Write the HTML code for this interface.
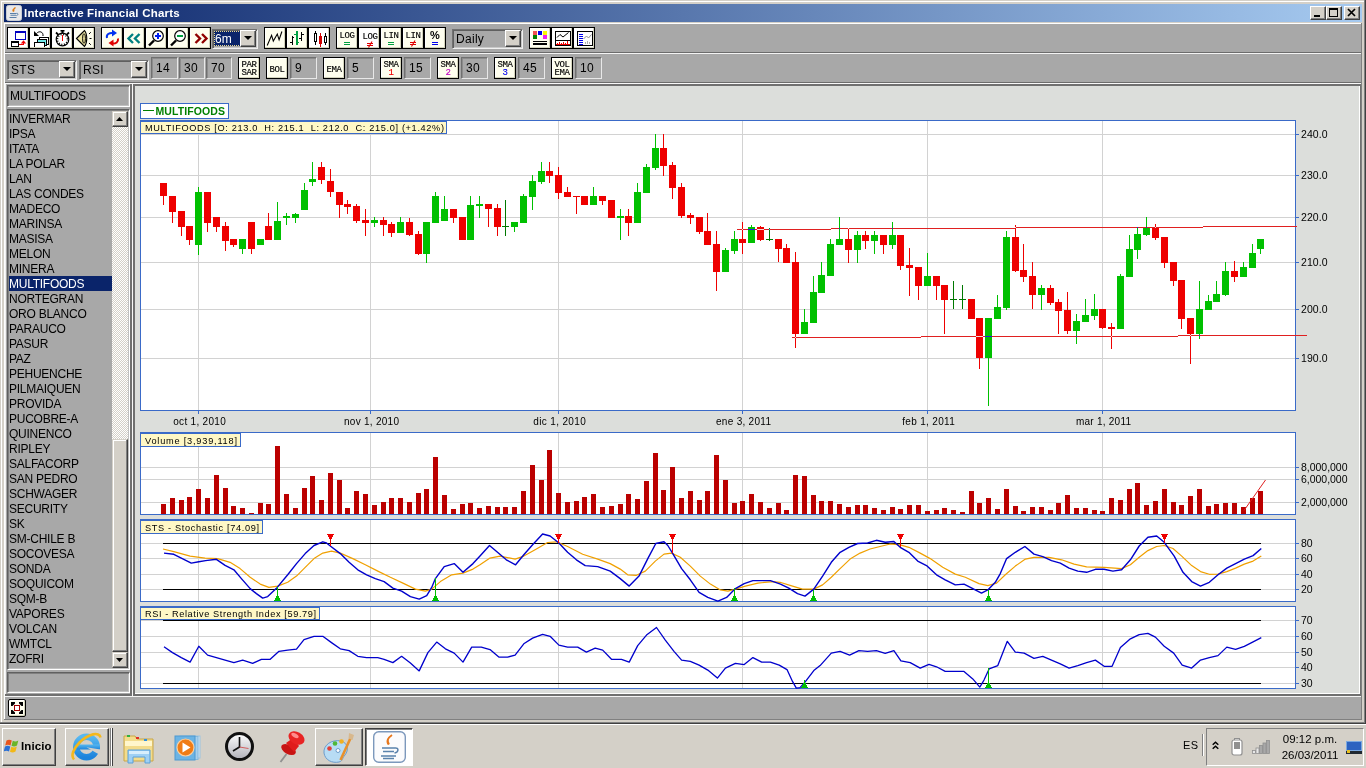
<!DOCTYPE html>
<html><head><meta charset="utf-8"><title>Interactive Financial Charts</title>
<style>
*{box-sizing:border-box;margin:0;padding:0}
html,body{width:1366px;height:768px;overflow:hidden}
body{position:relative;background:#d4d0c8;font-family:"Liberation Sans",sans-serif;font-size:12px;color:#000}
.a{position:absolute}
#root{position:absolute;left:0;top:0;width:1366px;height:768px;will-change:transform}
.tb{position:absolute;width:22px;height:22px;background:#fefeee;border:1px solid #000;box-shadow:inset -1px -1px 0 #d4d4bc,inset 1px 1px 0 #fff}
.tb.w{background:#fff}
.tb svg{position:absolute;left:0;top:0}
.tb2{position:absolute;width:22px;height:22px;background:#ffffe1;border:1px solid #000;box-shadow:inset -1px -1px 0 #808070,inset 1px 1px 0 #fff;font-family:"Liberation Mono",monospace;font-size:9px;line-height:8px;text-align:center;letter-spacing:-0.5px}
.sunk{position:absolute;border:1px solid;border-color:#606060 #fff #fff #606060;box-shadow:inset 1px 1px 0 #808080,inset -1px -1px 0 #c0c0c0;background:#a8a8a8}
.fld{position:absolute;border:1px solid;border-color:#707070 #e8e8e8 #e8e8e8 #707070;box-shadow:inset 1px 1px 0 #8c8c8c;background:#a8a8a8;font-size:12px;line-height:20px;padding-left:4px;color:#000;height:22px;letter-spacing:0.300px}
.combo{position:absolute;height:20px;border:1px solid;border-color:#707070 #f0f0f0 #f0f0f0 #707070;box-shadow:inset 1px 1px 0 #606060,inset -1px -1px 0 #c8c8c8;background:#a8a8a8;font-size:12px;letter-spacing:0.300px}
.cbtn{position:absolute;right:1px;top:0px;width:16px;height:17px;background:#d4d0c8;border:1px solid;border-color:#fff #404040 #404040 #fff;box-shadow:inset -1px -1px 0 #808080}
.li{position:absolute;left:0;width:103px;height:15px;line-height:15px;font-size:12px;padding-left:0px;padding-top:1px;white-space:nowrap;letter-spacing:-0.250px}
.sel{background:#0a246a;color:#fff}
svg text{font-family:"Liberation Sans",sans-serif}
</style></head>
<body><div id="root">
<div class="a" style="left:0px;top:0px;width:1366px;height:724px;background:#d4d0c8;"></div>
<div class="a" style="left:1px;top:1px;width:1363px;height:1px;background:#fff;"></div>
<div class="a" style="left:1px;top:1px;width:1px;height:721px;background:#fff;"></div>
<div class="a" style="left:1364px;top:0px;width:1px;height:723px;background:#808080;"></div>
<div class="a" style="left:1365px;top:0px;width:1px;height:724px;background:#404040;"></div>
<div class="a" style="left:0px;top:722px;width:1365px;height:1px;background:#808080;"></div>
<div class="a" style="left:0px;top:723px;width:1366px;height:1px;background:#404040;"></div>
<div class="a" style="left:4px;top:4px;width:1358px;height:18px;background:linear-gradient(90deg,#0a246a,#a6caf0)"></div>
<svg class="a" style="left:6px;top:5px" width="16" height="16" viewBox="0 0 16 16"><rect x="0.5" y="0.5" width="15" height="15" rx="2" fill="#e8e8ea" stroke="#c8ccd4"/><path d="M9.5 2.5c-2 1.2-2.6 2.2-1.6 4" stroke="#e07a10" stroke-width="1.3" fill="none"/><path d="M7.2 4.2c-.6.9-.4 1.6.1 2.6" stroke="#e07a10" stroke-width="1" fill="none"/><path d="M4 8.5h6.5M4.5 10.3h5.5M3.5 12.5h7" stroke="#5a7fa8" stroke-width="1.1"/><path d="M10.5 8.3c2-.3 2 1.9-.2 2.4" stroke="#5a7fa8" stroke-width="1" fill="none"/></svg>
<div class="a" style="left:24px;top:5px;height:16px;line-height:16px;color:#fff;font-weight:bold;font-size:11.5px;letter-spacing:0.2px;white-space:nowrap" id="title">Interactive Financial Charts</div>
<div class="a" style="left:1310px;top:6px;width:16px;height:14px;background:#d4d0c8;border:1px solid;border-color:#fff #404040 #404040 #fff;box-shadow:inset -1px -1px 0 #808080"></div>
<div class="a" style="left:1326px;top:6px;width:16px;height:14px;background:#d4d0c8;border:1px solid;border-color:#fff #404040 #404040 #fff;box-shadow:inset -1px -1px 0 #808080"></div>
<div class="a" style="left:1344px;top:6px;width:16px;height:14px;background:#d4d0c8;border:1px solid;border-color:#fff #404040 #404040 #fff;box-shadow:inset -1px -1px 0 #808080"></div>
<div class="a" style="left:1314px;top:15px;width:6px;height:2px;background:#000;"></div>
<div class="a" style="left:1329px;top:8px;width:9px;height:9px;border:1px solid #000;border-top-width:2px"></div>
<svg class="a" style="left:1347px;top:8px" width="10" height="9" viewBox="0 0 10 9"><path d="M1 1l7 7M8 1l-7 7" stroke="#000" stroke-width="1.7"/></svg>
<div class="a" style="left:4px;top:23px;width:1358px;height:697px;background:#808080;"></div>
<div class="a" style="left:4px;top:23px;width:1357px;height:696px;background:#fff;"></div>
<div class="a" style="left:5px;top:24px;width:1356px;height:695px;background:#a8a8a8;"></div>
<div class="a" style="left:5px;top:52px;width:1356px;height:1px;background:#6c6c6c;"></div>
<div class="a" style="left:5px;top:53px;width:1356px;height:1px;background:#f4f4f4;"></div>
<div class="a" style="left:5px;top:82px;width:1356px;height:1px;background:#6c6c6c;"></div>
<div class="a" style="left:5px;top:83px;width:1356px;height:1px;background:#f8f8f8;"></div>
<div class="a" style="left:5px;top:696px;width:1356px;height:1px;background:#f4f4f4;"></div>
<div class="tb w" style="left:7px;top:27px"><svg style="left:-1px;top:-1px" width="22" height="22" viewBox="0 0 22 22" shape-rendering="crispEdges"><rect x="8.500" y="4.500" width="10" height="8" fill="#fff" stroke="#0000c0"/><rect x="8" y="4" width="11" height="2" fill="#0000c0"/><rect x="4.500" y="14.500" width="7" height="5" fill="#fff" stroke="#000"/><rect x="4" y="14" width="8" height="2" fill="#000"/><path d="M12 17.500h4.500v-2" stroke="#f00000" fill="none"/><path d="M13.800 16.500h5.400l-2.700-3.300z" fill="#f00000" shape-rendering="auto"/></svg></div>
<div class="tb w" style="left:29px;top:27px"><svg style="left:-1px;top:-1px" width="22" height="22" viewBox="0 0 22 22" shape-rendering="crispEdges"><path d="M5 4v5h5z" fill="#000" shape-rendering="auto"/><path d="M7.500 6.500c2.500-3 7-2 6.500 2.500" stroke="#000" fill="none" shape-rendering="auto"/><rect x="10.500" y="10.500" width="9" height="7" fill="#fff" stroke="#000"/><rect x="8.500" y="12.500" width="9" height="6" fill="#6fe8e8" stroke="#000"/><rect x="8" y="12" width="10" height="1" fill="#000"/><path d="M5.500 20v-5h10v5" fill="#fff" stroke="#000"/></svg></div>
<div class="tb w" style="left:51px;top:27px"><svg style="left:-1px;top:-1px" width="22" height="22" viewBox="0 0 22 22" shape-rendering="crispEdges"><g shape-rendering="auto"><circle cx="11.500" cy="12.500" r="6.300" fill="#fff" stroke="#000" stroke-width="1.200"/><circle cx="11.500" cy="12.500" r="5" fill="none" stroke="#000" stroke-width="1.600" stroke-dasharray="1 1.620"/><circle cx="11.500" cy="12.500" r="3.800" fill="#fff"/><rect x="10.500" y="3" width="2" height="3.500" fill="#000"/><rect x="9.500" y="3" width="4" height="1.500" fill="#000"/><path d="M5 5.500l2.200 2.200M18 5.500l-2.200 2.200" stroke="#000" stroke-width="1.800"/></g><rect x="11" y="8" width="1" height="6" fill="#f00000"/></svg></div>
<div class="tb" style="left:73px;top:27px"><svg style="left:-1px;top:-1px" width="22" height="22" viewBox="0 0 22 22" shape-rendering="crispEdges"><g shape-rendering="auto"><path d="M3.500 11.500C6 9 9 6 11.500 3.500C14.500 7 14.500 16 11.500 19.500C9 17 6 14 3.500 11.500z" fill="#ece4a0" stroke="#000" stroke-width="1.100"/><ellipse cx="11" cy="11.500" rx="1.500" ry="4.800" fill="#d8d090" stroke="#000" stroke-width="0.900"/><path d="M16 7l1.800-1.800M16.500 11.500h2M16 16l1.800 1.800" stroke="#000" stroke-width="1"/></g></svg></div>
<div class="tb" style="left:101px;top:27px"><svg style="left:-1px;top:-1px" width="22" height="22" viewBox="0 0 22 22" shape-rendering="crispEdges"><g shape-rendering="auto"><path d="M6 11c-1-3.500 2-5.500 6.500-5" stroke="#0030f0" stroke-width="2" fill="none"/><path d="M11 2.500l5 3.500l-5 3.500z" fill="#0030f0"/><path d="M17 11.500c.5 3.500-2 5.500-6 5" stroke="#e00000" stroke-width="2" fill="none"/><path d="M12.500 12.500l-5 3.500l5 3.500z" fill="#e00000"/></g></svg></div>
<div class="tb" style="left:123px;top:27px"><svg style="left:-1px;top:-1px" width="22" height="22" viewBox="0 0 22 22" shape-rendering="crispEdges"><g shape-rendering="auto"><path d="M10 7l-4.500 4.500l4.500 4.500M16.500 7l-4.500 4.500l4.500 4.500" stroke="#008080" stroke-width="2.400" fill="none"/></g></svg></div>
<div class="tb" style="left:145px;top:27px"><svg style="left:-1px;top:-1px" width="22" height="22" viewBox="0 0 22 22" shape-rendering="crispEdges"><g shape-rendering="auto"><circle cx="13" cy="9" r="5.300" fill="#fff" stroke="#000" stroke-width="1.200"/><path d="M9 13.500l-5 5" stroke="#000" stroke-width="2.400"/><path d="M10 9h6M13 6v6" stroke="#0020f0" stroke-width="2"/></g></svg></div>
<div class="tb" style="left:167px;top:27px"><svg style="left:-1px;top:-1px" width="22" height="22" viewBox="0 0 22 22" shape-rendering="crispEdges"><g shape-rendering="auto"><circle cx="13" cy="9" r="5.300" fill="#fff" stroke="#000" stroke-width="1.200"/><path d="M9 13.500l-5 5" stroke="#000" stroke-width="2.400"/><path d="M10 9h6" stroke="#00a040" stroke-width="2"/></g></svg></div>
<div class="tb" style="left:189px;top:27px"><svg style="left:-1px;top:-1px" width="22" height="22" viewBox="0 0 22 22" shape-rendering="crispEdges"><g shape-rendering="auto"><path d="M6.500 7l4.500 4.500l-4.500 4.500M13 7l4.500 4.500l-4.500 4.500" stroke="#900000" stroke-width="2.400" fill="none"/></g></svg></div>
<div class="combo" style="left:212px;top:29px;width:46px;height:20px"><span style="position:absolute;left:1px;top:1px;width:27px;height:15px;background:#0a246a;color:#fff;line-height:15px;padding-left:0px;border:1px dotted #e8d890;letter-spacing:0">6m</span><div class="cbtn" style="height:17px"><svg style="position:absolute;left:3px;top:5px" width="8" height="4" viewBox="0 0 8 4"><path d="M0 0h8l-4 4z" fill="#000"/></svg></div></div>
<div class="tb" style="left:264px;top:27px"><svg style="left:-1px;top:-1px" width="22" height="22" viewBox="0 0 22 22" shape-rendering="crispEdges"><g shape-rendering="auto"><path d="M3.200 18.500L7.600 8.400L9.300 14.100L13.300 7.100L15.100 12.800L17.900 4.500" stroke="#000" stroke-width="1.100" fill="none"/></g></svg></div>
<div class="tb" style="left:286px;top:27px"><svg style="left:-1px;top:-1px" width="22" height="22" viewBox="0 0 22 22" shape-rendering="crispEdges"><rect x="6" y="9" width="1" height="9" fill="#000"/><rect x="4" y="15" width="2" height="1" fill="#000"/><rect x="7" y="10" width="1" height="1" fill="#000"/><rect x="10" y="4" width="2" height="14" fill="#00a040"/><rect x="8" y="7" width="2" height="1" fill="#00a040"/><rect x="12" y="15" width="1" height="1" fill="#00a040"/><rect x="15" y="5" width="1" height="9" fill="#000"/><rect x="13" y="11" width="2" height="1" fill="#000"/><rect x="16" y="7" width="2" height="1" fill="#000"/></svg></div>
<div class="tb w" style="left:308px;top:27px"><svg style="left:-1px;top:-1px" width="22" height="22" viewBox="0 0 22 22" shape-rendering="crispEdges"><rect x="7" y="4" width="1" height="14" fill="#000"/><rect x="6.500" y="6.500" width="2" height="8" fill="#fff" stroke="#000"/><rect x="12" y="6" width="1" height="14" fill="#d00000"/><rect x="11" y="9" width="3" height="8" fill="#d00000"/><rect x="17" y="6" width="1" height="12" fill="#000"/><rect x="16.500" y="9.500" width="2" height="6" fill="#fff" stroke="#000"/></svg></div>
<div class="tb" style="left:336px;top:27px"><svg style="left:-1px;top:-1px" width="22" height="22" viewBox="0 0 22 22" shape-rendering="crispEdges"><text x="11" y="10.5" text-anchor="middle" font-size="9" fill="#000" style="font-family:'Liberation Mono',monospace;letter-spacing:-0.400px" stroke="#000" stroke-width="0.150">LOG</text><rect x="8" y="15" width="6" height="1" fill="#00a040"/><rect x="8" y="17" width="6" height="1" fill="#00a040"/></svg></div>
<div class="tb w" style="left:358px;top:27px"><svg style="left:-1px;top:-1px" width="22" height="22" viewBox="0 0 22 22" shape-rendering="crispEdges"><text x="12" y="11.5" text-anchor="middle" font-size="9" fill="#000" style="font-family:'Liberation Mono',monospace;letter-spacing:-0.400px" stroke="#000" stroke-width="0.150">LOG</text><rect x="9" y="16" width="6" height="1" fill="#e00000"/><rect x="9" y="18" width="6" height="1" fill="#e00000"/><path d="M10.5 20.5l3.500 -6" stroke="#e00000" stroke-width="1.100" shape-rendering="auto"/></svg></div>
<div class="tb" style="left:380px;top:27px"><svg style="left:-1px;top:-1px" width="22" height="22" viewBox="0 0 22 22" shape-rendering="crispEdges"><text x="11" y="10.5" text-anchor="middle" font-size="9" fill="#000" style="font-family:'Liberation Mono',monospace;letter-spacing:-0.400px" stroke="#000" stroke-width="0.150">LIN</text><rect x="8" y="15" width="6" height="1" fill="#00a040"/><rect x="8" y="17" width="6" height="1" fill="#00a040"/></svg></div>
<div class="tb" style="left:402px;top:27px"><svg style="left:-1px;top:-1px" width="22" height="22" viewBox="0 0 22 22" shape-rendering="crispEdges"><text x="11" y="10.5" text-anchor="middle" font-size="9" fill="#000" style="font-family:'Liberation Mono',monospace;letter-spacing:-0.400px" stroke="#000" stroke-width="0.150">LIN</text><rect x="8" y="15" width="6" height="1" fill="#e00000"/><rect x="8" y="17" width="6" height="1" fill="#e00000"/><path d="M9.5 19.5l3.500 -6" stroke="#e00000" stroke-width="1.100" shape-rendering="auto"/></svg></div>
<div class="tb" style="left:424px;top:27px"><svg style="left:-1px;top:-1px" width="22" height="22" viewBox="0 0 22 22" shape-rendering="crispEdges"><text x="11" y="12" text-anchor="middle" font-size="11" font-weight="bold" fill="#000" style="font-family:'Liberation Sans',sans-serif">%</text><rect x="8" y="15" width="6" height="1" fill="#0000f0"/><rect x="8" y="17" width="6" height="1" fill="#0000f0"/></svg></div>
<div class="combo" style="left:452px;top:29px;width:71px;height:20px"><span style="position:absolute;left:3px;top:1px;line-height:16px">Daily</span><div class="cbtn" style="height:17px"><svg style="position:absolute;left:3px;top:5px" width="8" height="4" viewBox="0 0 8 4"><path d="M0 0h8l-4 4z" fill="#000"/></svg></div></div>
<div class="tb" style="left:529px;top:27px"><svg style="left:-1px;top:-1px" width="22" height="22" viewBox="0 0 22 22" shape-rendering="crispEdges"><rect x="4" y="4" width="4" height="4" fill="#f05050"/><rect x="9" y="4" width="4" height="4" fill="#0000f0"/><rect x="14" y="4" width="4" height="4" fill="#f8f800"/><rect x="4" y="8" width="4" height="4" fill="#008000"/><rect x="14" y="8" width="4" height="4" fill="#f020f0"/><rect x="4" y="14" width="14" height="1" fill="#000"/><rect x="4" y="16" width="14" height="2" fill="#000"/></svg></div>
<div class="tb w" style="left:551px;top:27px"><svg style="left:-1px;top:-1px" width="22" height="22" viewBox="0 0 22 22" shape-rendering="crispEdges"><rect x="4.500" y="4.500" width="15" height="14" fill="#fff" stroke="#000"/><path d="M6 10.500l3-3l3 2.500l5.500-4.500" stroke="#000" fill="none" shape-rendering="auto"/><rect x="5" y="13" width="14" height="1" fill="#000"/><path d="M6.500 18v-2M8.500 18v-3M10.500 18v-2M12.500 18v-3M14.500 18v-2M16.500 18v-4" stroke="#f00000"/><rect x="5" y="17" width="14" height="1" fill="#f00000"/></svg></div>
<div class="tb w" style="left:573px;top:27px"><svg style="left:-1px;top:-1px" width="22" height="22" viewBox="0 0 22 22" shape-rendering="crispEdges"><rect x="4.500" y="4.500" width="15" height="14" fill="#fff" stroke="#000"/><path d="M6 7.500h4M6 9.500h4M6 11.500h4M6 13.500h4M6 15.500h4M6 17.500h4" stroke="#0000f0"/><path d="M10.500 12l3-3l2 2l3-3.500" stroke="#909090" fill="none" shape-rendering="auto"/><path d="M12.500 17v-2M14.500 17v-3M16.500 17v-2" stroke="#b0b0b0"/></svg></div>
<div class="combo" style="left:7px;top:60px;width:70px;height:20px"><span style="position:absolute;left:3px;top:1px;line-height:16px">STS</span><div class="cbtn" style="height:17px"><svg style="position:absolute;left:3px;top:5px" width="8" height="4" viewBox="0 0 8 4"><path d="M0 0h8l-4 4z" fill="#000"/></svg></div></div>
<div class="combo" style="left:79px;top:60px;width:70px;height:20px"><span style="position:absolute;left:3px;top:1px;line-height:16px">RSI</span><div class="cbtn" style="height:17px"><svg style="position:absolute;left:3px;top:5px" width="8" height="4" viewBox="0 0 8 4"><path d="M0 0h8l-4 4z" fill="#000"/></svg></div></div>
<div class="fld" style="left:151px;top:57px;width:27px">14</div>
<div class="fld" style="left:179px;top:57px;width:26px">30</div>
<div class="fld" style="left:206px;top:57px;width:26px">70</div>
<div class="tb" style="left:238px;top:57px"><svg style="left:-1px;top:-1px" width="22" height="22" viewBox="0 0 22 22" shape-rendering="crispEdges"><text x="11" y="10" text-anchor="middle" font-size="9" fill="#000" style="font-family:'Liberation Mono',monospace;letter-spacing:-0.400px" stroke="#000" stroke-width="0.150">PAR</text><text x="11" y="18" text-anchor="middle" font-size="9" fill="#000" style="font-family:'Liberation Mono',monospace;letter-spacing:-0.400px" stroke="#000" stroke-width="0.150">SAR</text></svg></div>
<div class="tb" style="left:266px;top:57px"><svg style="left:-1px;top:-1px" width="22" height="22" viewBox="0 0 22 22" shape-rendering="crispEdges"><text x="11" y="14.5" text-anchor="middle" font-size="9" fill="#000" style="font-family:'Liberation Mono',monospace;letter-spacing:-0.400px" stroke="#000" stroke-width="0.150">BOL</text></svg></div>
<div class="fld" style="left:290px;top:57px;width:27px">9</div>
<div class="tb" style="left:323px;top:57px"><svg style="left:-1px;top:-1px" width="22" height="22" viewBox="0 0 22 22" shape-rendering="crispEdges"><text x="11" y="14.5" text-anchor="middle" font-size="9" fill="#000" style="font-family:'Liberation Mono',monospace;letter-spacing:-0.400px" stroke="#000" stroke-width="0.150">EMA</text></svg></div>
<div class="fld" style="left:347px;top:57px;width:27px">5</div>
<div class="tb" style="left:380px;top:57px"><svg style="left:-1px;top:-1px" width="22" height="22" viewBox="0 0 22 22" shape-rendering="crispEdges"><text x="11" y="10" text-anchor="middle" font-size="9" fill="#000" style="font-family:'Liberation Mono',monospace;letter-spacing:-0.400px" stroke="#000" stroke-width="0.150">SMA</text><text x="11" y="18" text-anchor="middle" font-size="9" fill="#f00000" style="font-family:'Liberation Mono',monospace;letter-spacing:-0.400px" stroke="#f00000" stroke-width="0.150">1</text></svg></div>
<div class="fld" style="left:404px;top:57px;width:27px">15</div>
<div class="tb" style="left:437px;top:57px"><svg style="left:-1px;top:-1px" width="22" height="22" viewBox="0 0 22 22" shape-rendering="crispEdges"><text x="11" y="10" text-anchor="middle" font-size="9" fill="#000" style="font-family:'Liberation Mono',monospace;letter-spacing:-0.400px" stroke="#000" stroke-width="0.150">SMA</text><text x="11" y="18" text-anchor="middle" font-size="9" fill="#c000c0" style="font-family:'Liberation Mono',monospace;letter-spacing:-0.400px" stroke="#c000c0" stroke-width="0.150">2</text></svg></div>
<div class="fld" style="left:461px;top:57px;width:27px">30</div>
<div class="tb" style="left:494px;top:57px"><svg style="left:-1px;top:-1px" width="22" height="22" viewBox="0 0 22 22" shape-rendering="crispEdges"><text x="11" y="10" text-anchor="middle" font-size="9" fill="#000" style="font-family:'Liberation Mono',monospace;letter-spacing:-0.400px" stroke="#000" stroke-width="0.150">SMA</text><text x="11" y="18" text-anchor="middle" font-size="9" fill="#0000f0" style="font-family:'Liberation Mono',monospace;letter-spacing:-0.400px" stroke="#0000f0" stroke-width="0.150">3</text></svg></div>
<div class="fld" style="left:518px;top:57px;width:27px">45</div>
<div class="tb" style="left:551px;top:57px"><svg style="left:-1px;top:-1px" width="22" height="22" viewBox="0 0 22 22" shape-rendering="crispEdges"><text x="11" y="10" text-anchor="middle" font-size="9" fill="#000" style="font-family:'Liberation Mono',monospace;letter-spacing:-0.400px" stroke="#000" stroke-width="0.150">VOL</text><text x="11" y="18" text-anchor="middle" font-size="9" fill="#000" style="font-family:'Liberation Mono',monospace;letter-spacing:-0.400px" stroke="#000" stroke-width="0.150">EMA</text></svg></div>
<div class="fld" style="left:575px;top:57px;width:27px">10</div>
<div class="a" style="left:5px;top:84px;width:1px;height:612px;background:#f0f0f0;"></div>
<div class="a" style="left:130px;top:84px;width:2px;height:612px;background:#707070;"></div>
<div class="a" style="left:5px;top:694px;width:127px;height:2px;background:#707070;"></div>
<div class="sunk" style="left:7px;top:85px;width:123px;height:22px;font-size:12px;line-height:21px;padding-left:2px;letter-spacing:-0.200px">MULTIFOODS</div>
<div class="sunk" style="left:7px;top:109px;width:123px;height:561px"></div>
<div class="a" style="left:9px;top:111px;width:103px;height:557px;overflow:hidden">
<div class="li" style="top:0px">INVERMAR</div>
<div class="li" style="top:15px">IPSA</div>
<div class="li" style="top:30px">ITATA</div>
<div class="li" style="top:45px">LA POLAR</div>
<div class="li" style="top:60px">LAN</div>
<div class="li" style="top:75px">LAS CONDES</div>
<div class="li" style="top:90px">MADECO</div>
<div class="li" style="top:105px">MARINSA</div>
<div class="li" style="top:120px">MASISA</div>
<div class="li" style="top:135px">MELON</div>
<div class="li" style="top:150px">MINERA</div>
<div class="li sel" style="top:165px">MULTIFOODS</div>
<div class="li" style="top:180px">NORTEGRAN</div>
<div class="li" style="top:195px">ORO BLANCO</div>
<div class="li" style="top:210px">PARAUCO</div>
<div class="li" style="top:225px">PASUR</div>
<div class="li" style="top:240px">PAZ</div>
<div class="li" style="top:255px">PEHUENCHE</div>
<div class="li" style="top:270px">PILMAIQUEN</div>
<div class="li" style="top:285px">PROVIDA</div>
<div class="li" style="top:300px">PUCOBRE-A</div>
<div class="li" style="top:315px">QUINENCO</div>
<div class="li" style="top:330px">RIPLEY</div>
<div class="li" style="top:345px">SALFACORP</div>
<div class="li" style="top:360px">SAN PEDRO</div>
<div class="li" style="top:375px">SCHWAGER</div>
<div class="li" style="top:390px">SECURITY</div>
<div class="li" style="top:405px">SK</div>
<div class="li" style="top:420px">SM-CHILE B</div>
<div class="li" style="top:435px">SOCOVESA</div>
<div class="li" style="top:450px">SONDA</div>
<div class="li" style="top:465px">SOQUICOM</div>
<div class="li" style="top:480px">SQM-B</div>
<div class="li" style="top:495px">VAPORES</div>
<div class="li" style="top:510px">VOLCAN</div>
<div class="li" style="top:525px">WMTCL</div>
<div class="li" style="top:540px">ZOFRI</div>
</div>
<div class="a" style="left:112px;top:111px;width:16px;height:557px;background:#e9e7e3;background-image:repeating-conic-gradient(#fff 0 25%,#d4d0c8 0 50%);background-size:2px 2px"></div>
<div class="a" style="left:112px;top:111px;width:16px;height:16px;background:#d4d0c8;border:1px solid;border-color:#d4d0c8 #404040 #404040 #d4d0c8;box-shadow:inset -1px -1px 0 #808080,inset 1px 1px 0 #fff"></div>
<div class="a" style="left:112px;top:652px;width:16px;height:16px;background:#d4d0c8;border:1px solid;border-color:#d4d0c8 #404040 #404040 #d4d0c8;box-shadow:inset -1px -1px 0 #808080,inset 1px 1px 0 #fff"></div>
<svg class="a" style="left:116px;top:117px" width="7" height="4" viewBox="0 0 7 4"><path d="M0 4h7l-3.500-4z" fill="#000"/></svg>
<svg class="a" style="left:116px;top:658px" width="7" height="4" viewBox="0 0 7 4"><path d="M0 0h7l-3.500 4z" fill="#000"/></svg>
<div class="a" style="left:112px;top:439px;width:16px;height:213px;background:#d4d0c8;border:1px solid;border-color:#d4d0c8 #404040 #404040 #d4d0c8;box-shadow:inset -1px -1px 0 #808080,inset 1px 1px 0 #fff"></div>
<div class="sunk" style="left:7px;top:672px;width:123px;height:21px"></div>
<svg class="a" style="left:0;top:0" width="1366" height="768" viewBox="0 0 1366 768" shape-rendering="crispEdges">
<rect x="132" y="84" width="1" height="612" fill="#f8f8f8" />
<rect x="133" y="84" width="1228" height="612" fill="#707070" />
<rect x="135" y="86" width="1225" height="608" fill="#fff" />
<rect x="135" y="86" width="1224" height="607" fill="#dcdedb" />
<rect x="140.5" y="103.5" width="88" height="15" fill="#fff" stroke="#3a6ac8"/>
<rect x="143" y="110" width="11" height="1" fill="#008000" />
<text x="155.500" y="114.500" font-size="10.500" font-weight="bold" fill="#008000" textLength="69.500" lengthAdjust="spacing">MULTIFOODS</text>
<rect x="140.5" y="120.5" width="1155" height="290" fill="#fff" stroke="#3a6ac8"/>
<rect x="141" y="134" width="1154" height="1" fill="#d2d2d2" /><rect x="141" y="175" width="1154" height="1" fill="#d2d2d2" /><rect x="141" y="217" width="1154" height="1" fill="#d2d2d2" /><rect x="141" y="262" width="1154" height="1" fill="#d2d2d2" /><rect x="141" y="309" width="1154" height="1" fill="#d2d2d2" /><rect x="141" y="358" width="1154" height="1" fill="#d2d2d2" />
<rect x="198" y="121" width="1" height="289" fill="#d2d2d2" /><rect x="370" y="121" width="1" height="289" fill="#d2d2d2" /><rect x="558" y="121" width="1" height="289" fill="#d2d2d2" /><rect x="742" y="121" width="1" height="289" fill="#d2d2d2" /><rect x="927" y="121" width="1" height="289" fill="#d2d2d2" /><rect x="1102" y="121" width="1" height="289" fill="#d2d2d2" />
<rect x="1296" y="134" width="3" height="1" fill="#3a6ac8" /><rect x="1296" y="175" width="3" height="1" fill="#3a6ac8" /><rect x="1296" y="217" width="3" height="1" fill="#3a6ac8" /><rect x="1296" y="262" width="3" height="1" fill="#3a6ac8" /><rect x="1296" y="309" width="3" height="1" fill="#3a6ac8" /><rect x="1296" y="358" width="3" height="1" fill="#3a6ac8" />
<text x="1301" y="138" font-size="10.5" textLength="26.5" lengthAdjust="spacing">240.0</text>
<text x="1301" y="179" font-size="10.5" textLength="26.5" lengthAdjust="spacing">230.0</text>
<text x="1301" y="221" font-size="10.5" textLength="26.5" lengthAdjust="spacing">220.0</text>
<text x="1301" y="266" font-size="10.5" textLength="26.5" lengthAdjust="spacing">210.0</text>
<text x="1301" y="313" font-size="10.5" textLength="26.5" lengthAdjust="spacing">200.0</text>
<text x="1301" y="362" font-size="10.5" textLength="26.5" lengthAdjust="spacing">190.0</text>
<rect x="198" y="411" width="1" height="3" fill="#3a6ac8" />
<text x="199.5" y="424.500" font-size="10" text-anchor="middle" textLength="52.5" lengthAdjust="spacing">oct 1, 2010</text>
<rect x="370" y="411" width="1" height="3" fill="#3a6ac8" />
<text x="371.5" y="424.500" font-size="10" text-anchor="middle" textLength="55" lengthAdjust="spacing">nov 1, 2010</text>
<rect x="558" y="411" width="1" height="3" fill="#3a6ac8" />
<text x="559.5" y="424.500" font-size="10" text-anchor="middle" textLength="52.5" lengthAdjust="spacing">dic 1, 2010</text>
<rect x="742" y="411" width="1" height="3" fill="#3a6ac8" />
<text x="743.5" y="424.500" font-size="10" text-anchor="middle" textLength="55" lengthAdjust="spacing">ene 3, 2011</text>
<rect x="927" y="411" width="1" height="3" fill="#3a6ac8" />
<text x="928.5" y="424.500" font-size="10" text-anchor="middle" textLength="52.5" lengthAdjust="spacing">feb 1, 2011</text>
<rect x="1102" y="411" width="1" height="3" fill="#3a6ac8" />
<text x="1103.5" y="424.500" font-size="10" text-anchor="middle" textLength="55" lengthAdjust="spacing">mar 1, 2011</text>
<rect x="163" y="183" width="1" height="22" fill="#ee0000" />
<rect x="160" y="183" width="7" height="13" fill="#ee0000" />
<rect x="172" y="196" width="1" height="27" fill="#ee0000" />
<rect x="169" y="196" width="7" height="16" fill="#ee0000" />
<rect x="181" y="211" width="1" height="25" fill="#ee0000" />
<rect x="178" y="211" width="7" height="16" fill="#ee0000" />
<rect x="189" y="226" width="1" height="19" fill="#ee0000" />
<rect x="186" y="226" width="7" height="14" fill="#ee0000" />
<rect x="198" y="187" width="1" height="68" fill="#00c000" />
<rect x="195" y="192" width="7" height="53" fill="#00c000" />
<rect x="207" y="192" width="1" height="40" fill="#ee0000" />
<rect x="204" y="192" width="7" height="31" fill="#ee0000" />
<rect x="216" y="217" width="1" height="15" fill="#ee0000" />
<rect x="213" y="217" width="7" height="10" fill="#ee0000" />
<rect x="225" y="222" width="1" height="29" fill="#ee0000" />
<rect x="222" y="226" width="7" height="15" fill="#ee0000" />
<rect x="233" y="239" width="1" height="8" fill="#ee0000" />
<rect x="230" y="239" width="7" height="6" fill="#ee0000" />
<rect x="242" y="239" width="1" height="15" fill="#00c000" />
<rect x="239" y="239" width="7" height="10" fill="#00c000" />
<rect x="251" y="222" width="1" height="32" fill="#ee0000" />
<rect x="248" y="222" width="7" height="27" fill="#ee0000" />
<rect x="260" y="239" width="1" height="6" fill="#00c000" />
<rect x="257" y="239" width="7" height="6" fill="#00c000" />
<rect x="268" y="213" width="1" height="27" fill="#ee0000" />
<rect x="265" y="226" width="7" height="14" fill="#ee0000" />
<rect x="277" y="202" width="1" height="38" fill="#00c000" />
<rect x="274" y="221" width="7" height="19" fill="#00c000" />
<rect x="286" y="213" width="1" height="12" fill="#00c000" />
<rect x="283" y="216" width="7" height="2" fill="#00c000" />
<rect x="295" y="213" width="1" height="10" fill="#00c000" />
<rect x="292" y="214" width="7" height="4" fill="#00c000" />
<rect x="304" y="183" width="1" height="27" fill="#00c000" />
<rect x="301" y="190" width="7" height="20" fill="#00c000" />
<rect x="312" y="162" width="1" height="24" fill="#00c000" />
<rect x="309" y="179" width="7" height="3" fill="#00c000" />
<rect x="321" y="162" width="1" height="22" fill="#ee0000" />
<rect x="318" y="167" width="7" height="13" fill="#ee0000" />
<rect x="330" y="169" width="1" height="28" fill="#ee0000" />
<rect x="327" y="181" width="7" height="11" fill="#ee0000" />
<rect x="339" y="192" width="1" height="26" fill="#ee0000" />
<rect x="336" y="192" width="7" height="13" fill="#ee0000" />
<rect x="347" y="200" width="1" height="14" fill="#ee0000" />
<rect x="344" y="204" width="7" height="3" fill="#ee0000" />
<rect x="356" y="204" width="1" height="19" fill="#ee0000" />
<rect x="353" y="206" width="7" height="15" fill="#ee0000" />
<rect x="365" y="209" width="1" height="27" fill="#ee0000" />
<rect x="362" y="220" width="7" height="3" fill="#ee0000" />
<rect x="374" y="217" width="1" height="10" fill="#00c000" />
<rect x="371" y="220" width="7" height="3" fill="#00c000" />
<rect x="383" y="217" width="1" height="19" fill="#ee0000" />
<rect x="380" y="220" width="7" height="5" fill="#ee0000" />
<rect x="391" y="222" width="1" height="15" fill="#ee0000" />
<rect x="388" y="224" width="7" height="9" fill="#ee0000" />
<rect x="400" y="217" width="1" height="16" fill="#00c000" />
<rect x="397" y="222" width="7" height="11" fill="#00c000" />
<rect x="409" y="218" width="1" height="18" fill="#ee0000" />
<rect x="406" y="222" width="7" height="13" fill="#ee0000" />
<rect x="418" y="231" width="1" height="24" fill="#ee0000" />
<rect x="415" y="234" width="7" height="20" fill="#ee0000" />
<rect x="426" y="222" width="1" height="41" fill="#00c000" />
<rect x="423" y="222" width="7" height="32" fill="#00c000" />
<rect x="435" y="192" width="1" height="31" fill="#00c000" />
<rect x="432" y="196" width="7" height="27" fill="#00c000" />
<rect x="444" y="196" width="1" height="25" fill="#00c000" />
<rect x="441" y="209" width="7" height="12" fill="#00c000" />
<rect x="453" y="209" width="1" height="14" fill="#ee0000" />
<rect x="450" y="209" width="7" height="9" fill="#ee0000" />
<rect x="462" y="217" width="1" height="23" fill="#ee0000" />
<rect x="459" y="217" width="7" height="23" fill="#ee0000" />
<rect x="470" y="196" width="1" height="44" fill="#00c000" />
<rect x="467" y="205" width="7" height="35" fill="#00c000" />
<rect x="479" y="196" width="1" height="22" fill="#00c000" />
<rect x="476" y="204" width="7" height="2" fill="#00c000" />
<rect x="488" y="204" width="1" height="23" fill="#ee0000" />
<rect x="485" y="204" width="7" height="5" fill="#ee0000" />
<rect x="497" y="204" width="1" height="32" fill="#ee0000" />
<rect x="494" y="208" width="7" height="19" fill="#ee0000" />
<rect x="505" y="200" width="1" height="36" fill="#007800" />
<rect x="502" y="226" width="7" height="1" fill="#007800" />
<rect x="514" y="222" width="1" height="10" fill="#00c000" />
<rect x="511" y="222" width="7" height="5" fill="#00c000" />
<rect x="523" y="194" width="1" height="29" fill="#00c000" />
<rect x="520" y="196" width="7" height="27" fill="#00c000" />
<rect x="532" y="175" width="1" height="35" fill="#00c000" />
<rect x="529" y="181" width="7" height="16" fill="#00c000" />
<rect x="541" y="162" width="1" height="22" fill="#00c000" />
<rect x="538" y="171" width="7" height="11" fill="#00c000" />
<rect x="549" y="162" width="1" height="21" fill="#ee0000" />
<rect x="546" y="171" width="7" height="5" fill="#ee0000" />
<rect x="558" y="167" width="1" height="32" fill="#ee0000" />
<rect x="555" y="175" width="7" height="18" fill="#ee0000" />
<rect x="567" y="187" width="1" height="10" fill="#ee0000" />
<rect x="564" y="192" width="7" height="5" fill="#ee0000" />
<rect x="576" y="196" width="1" height="18" fill="#ee0000" />
<rect x="573" y="196" width="7" height="1" fill="#ee0000" />
<rect x="584" y="196" width="1" height="9" fill="#ee0000" />
<rect x="581" y="196" width="7" height="9" fill="#ee0000" />
<rect x="593" y="187" width="1" height="18" fill="#00c000" />
<rect x="590" y="196" width="7" height="9" fill="#00c000" />
<rect x="602" y="196" width="1" height="9" fill="#ee0000" />
<rect x="599" y="196" width="7" height="5" fill="#ee0000" />
<rect x="611" y="200" width="1" height="18" fill="#ee0000" />
<rect x="608" y="200" width="7" height="18" fill="#ee0000" />
<rect x="620" y="209" width="1" height="31" fill="#00c000" />
<rect x="617" y="216" width="7" height="2" fill="#00c000" />
<rect x="628" y="209" width="1" height="27" fill="#ee0000" />
<rect x="625" y="216" width="7" height="7" fill="#ee0000" />
<rect x="637" y="183" width="1" height="40" fill="#00c000" />
<rect x="634" y="192" width="7" height="31" fill="#00c000" />
<rect x="646" y="164" width="1" height="29" fill="#00c000" />
<rect x="643" y="167" width="7" height="26" fill="#00c000" />
<rect x="655" y="134" width="1" height="36" fill="#00c000" />
<rect x="652" y="148" width="7" height="20" fill="#00c000" />
<rect x="663" y="134" width="1" height="42" fill="#ee0000" />
<rect x="660" y="148" width="7" height="18" fill="#ee0000" />
<rect x="672" y="162" width="1" height="37" fill="#ee0000" />
<rect x="669" y="165" width="7" height="23" fill="#ee0000" />
<rect x="681" y="183" width="1" height="35" fill="#ee0000" />
<rect x="678" y="187" width="7" height="29" fill="#ee0000" />
<rect x="690" y="213" width="1" height="11" fill="#ee0000" />
<rect x="687" y="215" width="7" height="3" fill="#ee0000" />
<rect x="699" y="217" width="1" height="17" fill="#ee0000" />
<rect x="696" y="217" width="7" height="15" fill="#ee0000" />
<rect x="707" y="213" width="1" height="32" fill="#ee0000" />
<rect x="704" y="231" width="7" height="14" fill="#ee0000" />
<rect x="716" y="231" width="1" height="60" fill="#ee0000" />
<rect x="713" y="244" width="7" height="28" fill="#ee0000" />
<rect x="725" y="248" width="1" height="24" fill="#00c000" />
<rect x="722" y="250" width="7" height="22" fill="#00c000" />
<rect x="734" y="231" width="1" height="23" fill="#00c000" />
<rect x="731" y="239" width="7" height="12" fill="#00c000" />
<rect x="742" y="222" width="1" height="32" fill="#ee0000" />
<rect x="739" y="239" width="7" height="4" fill="#ee0000" />
<rect x="751" y="225" width="1" height="18" fill="#00c000" />
<rect x="748" y="227" width="7" height="16" fill="#00c000" />
<rect x="760" y="226" width="1" height="15" fill="#ee0000" />
<rect x="757" y="227" width="7" height="13" fill="#ee0000" />
<rect x="769" y="228" width="1" height="13" fill="#007800" />
<rect x="766" y="239" width="7" height="1" fill="#007800" />
<rect x="778" y="239" width="1" height="23" fill="#ee0000" />
<rect x="775" y="239" width="7" height="10" fill="#ee0000" />
<rect x="786" y="244" width="1" height="19" fill="#ee0000" />
<rect x="783" y="248" width="7" height="15" fill="#ee0000" />
<rect x="795" y="252" width="1" height="96" fill="#ee0000" />
<rect x="792" y="262" width="7" height="72" fill="#ee0000" />
<rect x="804" y="309" width="1" height="25" fill="#00c000" />
<rect x="801" y="322" width="7" height="12" fill="#00c000" />
<rect x="813" y="276" width="1" height="47" fill="#00c000" />
<rect x="810" y="292" width="7" height="31" fill="#00c000" />
<rect x="821" y="262" width="1" height="31" fill="#00c000" />
<rect x="818" y="275" width="7" height="18" fill="#00c000" />
<rect x="830" y="239" width="1" height="37" fill="#00c000" />
<rect x="827" y="244" width="7" height="32" fill="#00c000" />
<rect x="839" y="217" width="1" height="28" fill="#00c000" />
<rect x="836" y="239" width="7" height="6" fill="#00c000" />
<rect x="848" y="228" width="1" height="35" fill="#ee0000" />
<rect x="845" y="239" width="7" height="11" fill="#ee0000" />
<rect x="857" y="231" width="1" height="32" fill="#00c000" />
<rect x="854" y="235" width="7" height="15" fill="#00c000" />
<rect x="865" y="231" width="1" height="18" fill="#ee0000" />
<rect x="862" y="235" width="7" height="6" fill="#ee0000" />
<rect x="874" y="231" width="1" height="23" fill="#00c000" />
<rect x="871" y="235" width="7" height="6" fill="#00c000" />
<rect x="883" y="235" width="1" height="19" fill="#ee0000" />
<rect x="880" y="235" width="7" height="10" fill="#ee0000" />
<rect x="892" y="222" width="1" height="27" fill="#00c000" />
<rect x="889" y="235" width="7" height="10" fill="#00c000" />
<rect x="900" y="235" width="1" height="35" fill="#ee0000" />
<rect x="897" y="235" width="7" height="31" fill="#ee0000" />
<rect x="909" y="248" width="1" height="48" fill="#ee0000" />
<rect x="906" y="265" width="7" height="3" fill="#ee0000" />
<rect x="918" y="267" width="1" height="33" fill="#ee0000" />
<rect x="915" y="267" width="7" height="19" fill="#ee0000" />
<rect x="927" y="253" width="1" height="33" fill="#00c000" />
<rect x="924" y="276" width="7" height="10" fill="#00c000" />
<rect x="936" y="276" width="1" height="24" fill="#ee0000" />
<rect x="933" y="276" width="7" height="10" fill="#ee0000" />
<rect x="944" y="285" width="1" height="49" fill="#ee0000" />
<rect x="941" y="285" width="7" height="15" fill="#ee0000" />
<rect x="953" y="281" width="1" height="28" fill="#007800" />
<rect x="950" y="299" width="7" height="1" fill="#007800" />
<rect x="962" y="285" width="1" height="24" fill="#007800" />
<rect x="959" y="299" width="7" height="1" fill="#007800" />
<rect x="971" y="299" width="1" height="20" fill="#ee0000" />
<rect x="968" y="299" width="7" height="20" fill="#ee0000" />
<rect x="979" y="318" width="1" height="51" fill="#ee0000" />
<rect x="976" y="318" width="7" height="40" fill="#ee0000" />
<rect x="988" y="318" width="1" height="88" fill="#00c000" />
<rect x="985" y="318" width="7" height="40" fill="#00c000" />
<rect x="997" y="295" width="1" height="24" fill="#00c000" />
<rect x="994" y="307" width="7" height="12" fill="#00c000" />
<rect x="1006" y="231" width="1" height="79" fill="#00c000" />
<rect x="1003" y="237" width="7" height="71" fill="#00c000" />
<rect x="1015" y="225" width="1" height="47" fill="#ee0000" />
<rect x="1012" y="237" width="7" height="34" fill="#ee0000" />
<rect x="1023" y="244" width="1" height="38" fill="#ee0000" />
<rect x="1020" y="270" width="7" height="7" fill="#ee0000" />
<rect x="1032" y="262" width="1" height="47" fill="#ee0000" />
<rect x="1029" y="276" width="7" height="19" fill="#ee0000" />
<rect x="1041" y="285" width="1" height="25" fill="#00c000" />
<rect x="1038" y="288" width="7" height="7" fill="#00c000" />
<rect x="1050" y="285" width="1" height="20" fill="#ee0000" />
<rect x="1047" y="288" width="7" height="15" fill="#ee0000" />
<rect x="1058" y="299" width="1" height="35" fill="#ee0000" />
<rect x="1055" y="302" width="7" height="9" fill="#ee0000" />
<rect x="1067" y="292" width="1" height="42" fill="#ee0000" />
<rect x="1064" y="310" width="7" height="21" fill="#ee0000" />
<rect x="1076" y="314" width="1" height="30" fill="#00c000" />
<rect x="1073" y="321" width="7" height="10" fill="#00c000" />
<rect x="1085" y="299" width="1" height="23" fill="#00c000" />
<rect x="1082" y="315" width="7" height="7" fill="#00c000" />
<rect x="1094" y="294" width="1" height="26" fill="#00c000" />
<rect x="1091" y="309" width="7" height="7" fill="#00c000" />
<rect x="1102" y="309" width="1" height="20" fill="#ee0000" />
<rect x="1099" y="309" width="7" height="19" fill="#ee0000" />
<rect x="1111" y="323" width="1" height="26" fill="#ee0000" />
<rect x="1108" y="327" width="7" height="2" fill="#ee0000" />
<rect x="1120" y="274" width="1" height="55" fill="#00c000" />
<rect x="1117" y="276" width="7" height="53" fill="#00c000" />
<rect x="1129" y="235" width="1" height="42" fill="#00c000" />
<rect x="1126" y="249" width="7" height="28" fill="#00c000" />
<rect x="1137" y="227" width="1" height="32" fill="#00c000" />
<rect x="1134" y="234" width="7" height="16" fill="#00c000" />
<rect x="1146" y="217" width="1" height="19" fill="#00c000" />
<rect x="1143" y="228" width="7" height="7" fill="#00c000" />
<rect x="1155" y="224" width="1" height="16" fill="#ee0000" />
<rect x="1152" y="228" width="7" height="10" fill="#ee0000" />
<rect x="1164" y="237" width="1" height="31" fill="#ee0000" />
<rect x="1161" y="237" width="7" height="26" fill="#ee0000" />
<rect x="1173" y="262" width="1" height="24" fill="#ee0000" />
<rect x="1170" y="262" width="7" height="19" fill="#ee0000" />
<rect x="1181" y="280" width="1" height="49" fill="#ee0000" />
<rect x="1178" y="280" width="7" height="39" fill="#ee0000" />
<rect x="1190" y="318" width="1" height="46" fill="#ee0000" />
<rect x="1187" y="318" width="7" height="16" fill="#ee0000" />
<rect x="1199" y="281" width="1" height="58" fill="#00c000" />
<rect x="1196" y="309" width="7" height="25" fill="#00c000" />
<rect x="1208" y="295" width="1" height="15" fill="#00c000" />
<rect x="1205" y="301" width="7" height="9" fill="#00c000" />
<rect x="1216" y="281" width="1" height="21" fill="#00c000" />
<rect x="1213" y="294" width="7" height="8" fill="#00c000" />
<rect x="1225" y="262" width="1" height="34" fill="#00c000" />
<rect x="1222" y="271" width="7" height="24" fill="#00c000" />
<rect x="1234" y="261" width="1" height="21" fill="#ee0000" />
<rect x="1231" y="271" width="7" height="6" fill="#ee0000" />
<rect x="1243" y="262" width="1" height="15" fill="#00c000" />
<rect x="1240" y="267" width="7" height="10" fill="#00c000" />
<rect x="1252" y="244" width="1" height="24" fill="#00c000" />
<rect x="1249" y="253" width="7" height="15" fill="#00c000" />
<rect x="1260" y="239" width="1" height="15" fill="#00c000" />
<rect x="1257" y="239" width="7" height="10" fill="#00c000" />
<rect x="737" y="229" width="94" height="1" fill="#e02020" />
<rect x="742" y="229" width="1" height="1" fill="#f1dfdf" />
<rect x="748" y="229" width="7" height="1" fill="#1f1fdf" />
<rect x="757" y="229" width="7" height="1" fill="#f1dfdf" />
<rect x="769" y="229" width="1" height="1" fill="#1fafdf" />
<rect x="831" y="228" width="184" height="1" fill="#e02020" />
<rect x="839" y="228" width="1" height="1" fill="#1f1fdf" />
<rect x="848" y="228" width="1" height="1" fill="#f1dfdf" />
<rect x="892" y="228" width="1" height="1" fill="#1f1fdf" />
<rect x="1015" y="227" width="188" height="1" fill="#e02020" />
<rect x="1015" y="227" width="1" height="1" fill="#f1dfdf" />
<rect x="1137" y="227" width="1" height="1" fill="#1f1fdf" />
<rect x="1146" y="227" width="1" height="1" fill="#1f1fdf" />
<rect x="1155" y="227" width="1" height="1" fill="#f1dfdf" />
<rect x="1203" y="226" width="94" height="1" fill="#e02020" />
<rect x="792" y="337" width="129" height="1" fill="#e02020" />
<rect x="795" y="337" width="1" height="1" fill="#f1dfdf" />
<rect x="921" y="336" width="257" height="1" fill="#e02020" />
<rect x="976" y="336" width="7" height="1" fill="#f1dfdf" />
<rect x="985" y="336" width="7" height="1" fill="#1f1fdf" />
<rect x="1076" y="336" width="1" height="1" fill="#1f1fdf" />
<rect x="1111" y="336" width="1" height="1" fill="#f1dfdf" />
<rect x="1178" y="335" width="129" height="1" fill="#e02020" />
<rect x="1190" y="335" width="1" height="1" fill="#f1dfdf" />
<rect x="1199" y="335" width="1" height="1" fill="#1f1fdf" />
<rect x="140.5" y="121.5" width="306" height="12" fill="#fff8c6" stroke="#3a6ac8"/><text x="145" y="130.5" font-size="9.200" textLength="299" lengthAdjust="spacing">MULTIFOODS [O: 213.0&#160; H: 215.1&#160; L: 212.0&#160; C: 215.0] (+1.42%)</text>
<rect x="140.5" y="432.5" width="1155" height="82" fill="#fff" stroke="#3a6ac8"/>
<rect x="141" y="467" width="1154" height="1" fill="#d2d2d2" /><rect x="141" y="479" width="1154" height="1" fill="#d2d2d2" /><rect x="141" y="502" width="1154" height="1" fill="#d2d2d2" />
<rect x="198" y="433" width="1" height="81" fill="#d2d2d2" /><rect x="370" y="433" width="1" height="81" fill="#d2d2d2" /><rect x="558" y="433" width="1" height="81" fill="#d2d2d2" /><rect x="742" y="433" width="1" height="81" fill="#d2d2d2" /><rect x="927" y="433" width="1" height="81" fill="#d2d2d2" /><rect x="1102" y="433" width="1" height="81" fill="#d2d2d2" />
<rect x="1296" y="467" width="3" height="1" fill="#3a6ac8" /><rect x="1296" y="479" width="3" height="1" fill="#3a6ac8" /><rect x="1296" y="502" width="3" height="1" fill="#3a6ac8" />
<text x="1301" y="471" font-size="10.5" textLength="46.5" lengthAdjust="spacing">8,000,000</text>
<text x="1301" y="483" font-size="10.5" textLength="46.5" lengthAdjust="spacing">6,000,000</text>
<text x="1301" y="506" font-size="10.5" textLength="46.5" lengthAdjust="spacing">2,000,000</text>
<rect x="161" y="504" width="5" height="10" fill="#bb0000" />
<rect x="170" y="498" width="5" height="16" fill="#bb0000" />
<rect x="179" y="500" width="5" height="14" fill="#bb0000" />
<rect x="187" y="497" width="5" height="17" fill="#bb0000" />
<rect x="196" y="489" width="5" height="25" fill="#bb0000" />
<rect x="205" y="498" width="5" height="16" fill="#bb0000" />
<rect x="214" y="475" width="5" height="39" fill="#bb0000" />
<rect x="223" y="488" width="5" height="26" fill="#bb0000" />
<rect x="231" y="506" width="5" height="8" fill="#bb0000" />
<rect x="240" y="508" width="5" height="6" fill="#bb0000" />
<rect x="249" y="513" width="5" height="1" fill="#bb0000" />
<rect x="258" y="503" width="5" height="11" fill="#bb0000" />
<rect x="266" y="504" width="5" height="10" fill="#bb0000" />
<rect x="275" y="446" width="5" height="68" fill="#bb0000" />
<rect x="284" y="494" width="5" height="20" fill="#bb0000" />
<rect x="293" y="508" width="5" height="6" fill="#bb0000" />
<rect x="302" y="488" width="5" height="26" fill="#bb0000" />
<rect x="310" y="476" width="5" height="38" fill="#bb0000" />
<rect x="319" y="500" width="5" height="14" fill="#bb0000" />
<rect x="328" y="473" width="5" height="41" fill="#bb0000" />
<rect x="337" y="480" width="5" height="34" fill="#bb0000" />
<rect x="345" y="508" width="5" height="6" fill="#bb0000" />
<rect x="354" y="491" width="5" height="23" fill="#bb0000" />
<rect x="363" y="494" width="5" height="20" fill="#bb0000" />
<rect x="372" y="505" width="5" height="9" fill="#bb0000" />
<rect x="381" y="502" width="5" height="12" fill="#bb0000" />
<rect x="389" y="498" width="5" height="16" fill="#bb0000" />
<rect x="398" y="498" width="5" height="16" fill="#bb0000" />
<rect x="407" y="502" width="5" height="12" fill="#bb0000" />
<rect x="416" y="493" width="5" height="21" fill="#bb0000" />
<rect x="424" y="489" width="5" height="25" fill="#bb0000" />
<rect x="433" y="457" width="5" height="57" fill="#bb0000" />
<rect x="442" y="495" width="5" height="19" fill="#bb0000" />
<rect x="451" y="509" width="5" height="5" fill="#bb0000" />
<rect x="460" y="504" width="5" height="10" fill="#bb0000" />
<rect x="468" y="503" width="5" height="11" fill="#bb0000" />
<rect x="477" y="508" width="5" height="6" fill="#bb0000" />
<rect x="486" y="506" width="5" height="8" fill="#bb0000" />
<rect x="495" y="507" width="5" height="7" fill="#bb0000" />
<rect x="503" y="507" width="5" height="7" fill="#bb0000" />
<rect x="512" y="507" width="5" height="7" fill="#bb0000" />
<rect x="521" y="491" width="5" height="23" fill="#bb0000" />
<rect x="530" y="465" width="5" height="49" fill="#bb0000" />
<rect x="539" y="480" width="5" height="34" fill="#bb0000" />
<rect x="547" y="450" width="5" height="64" fill="#bb0000" />
<rect x="556" y="493" width="5" height="21" fill="#bb0000" />
<rect x="565" y="502" width="5" height="12" fill="#bb0000" />
<rect x="574" y="501" width="5" height="13" fill="#bb0000" />
<rect x="582" y="497" width="5" height="17" fill="#bb0000" />
<rect x="591" y="494" width="5" height="20" fill="#bb0000" />
<rect x="600" y="507" width="5" height="7" fill="#bb0000" />
<rect x="609" y="506" width="5" height="8" fill="#bb0000" />
<rect x="618" y="504" width="5" height="10" fill="#bb0000" />
<rect x="626" y="494" width="5" height="20" fill="#bb0000" />
<rect x="635" y="499" width="5" height="15" fill="#bb0000" />
<rect x="644" y="481" width="5" height="33" fill="#bb0000" />
<rect x="653" y="453" width="5" height="61" fill="#bb0000" />
<rect x="661" y="490" width="5" height="24" fill="#bb0000" />
<rect x="670" y="467" width="5" height="47" fill="#bb0000" />
<rect x="679" y="498" width="5" height="16" fill="#bb0000" />
<rect x="688" y="491" width="5" height="23" fill="#bb0000" />
<rect x="697" y="500" width="5" height="14" fill="#bb0000" />
<rect x="705" y="491" width="5" height="23" fill="#bb0000" />
<rect x="714" y="455" width="5" height="59" fill="#bb0000" />
<rect x="723" y="480" width="5" height="34" fill="#bb0000" />
<rect x="732" y="503" width="5" height="11" fill="#bb0000" />
<rect x="740" y="501" width="5" height="13" fill="#bb0000" />
<rect x="749" y="494" width="5" height="20" fill="#bb0000" />
<rect x="758" y="502" width="5" height="12" fill="#bb0000" />
<rect x="767" y="508" width="5" height="6" fill="#bb0000" />
<rect x="776" y="503" width="5" height="11" fill="#bb0000" />
<rect x="784" y="510" width="5" height="4" fill="#bb0000" />
<rect x="793" y="475" width="5" height="39" fill="#bb0000" />
<rect x="802" y="476" width="5" height="38" fill="#bb0000" />
<rect x="811" y="495" width="5" height="19" fill="#bb0000" />
<rect x="819" y="501" width="5" height="13" fill="#bb0000" />
<rect x="828" y="501" width="5" height="13" fill="#bb0000" />
<rect x="837" y="504" width="5" height="10" fill="#bb0000" />
<rect x="846" y="507" width="5" height="7" fill="#bb0000" />
<rect x="855" y="505" width="5" height="9" fill="#bb0000" />
<rect x="863" y="505" width="5" height="9" fill="#bb0000" />
<rect x="872" y="508" width="5" height="6" fill="#bb0000" />
<rect x="881" y="510" width="5" height="4" fill="#bb0000" />
<rect x="890" y="507" width="5" height="7" fill="#bb0000" />
<rect x="898" y="509" width="5" height="5" fill="#bb0000" />
<rect x="907" y="505" width="5" height="9" fill="#bb0000" />
<rect x="916" y="505" width="5" height="9" fill="#bb0000" />
<rect x="925" y="511" width="5" height="3" fill="#bb0000" />
<rect x="934" y="510" width="5" height="4" fill="#bb0000" />
<rect x="942" y="508" width="5" height="6" fill="#bb0000" />
<rect x="951" y="510" width="5" height="4" fill="#bb0000" />
<rect x="960" y="512" width="5" height="2" fill="#bb0000" />
<rect x="969" y="491" width="5" height="23" fill="#bb0000" />
<rect x="977" y="503" width="5" height="11" fill="#bb0000" />
<rect x="986" y="498" width="5" height="16" fill="#bb0000" />
<rect x="995" y="509" width="5" height="5" fill="#bb0000" />
<rect x="1004" y="489" width="5" height="25" fill="#bb0000" />
<rect x="1013" y="506" width="5" height="8" fill="#bb0000" />
<rect x="1021" y="511" width="5" height="3" fill="#bb0000" />
<rect x="1030" y="507" width="5" height="7" fill="#bb0000" />
<rect x="1039" y="507" width="5" height="7" fill="#bb0000" />
<rect x="1048" y="510" width="5" height="4" fill="#bb0000" />
<rect x="1056" y="503" width="5" height="11" fill="#bb0000" />
<rect x="1065" y="495" width="5" height="19" fill="#bb0000" />
<rect x="1074" y="508" width="5" height="6" fill="#bb0000" />
<rect x="1083" y="508" width="5" height="6" fill="#bb0000" />
<rect x="1092" y="510" width="5" height="4" fill="#bb0000" />
<rect x="1100" y="511" width="5" height="3" fill="#bb0000" />
<rect x="1109" y="498" width="5" height="16" fill="#bb0000" />
<rect x="1118" y="500" width="5" height="14" fill="#bb0000" />
<rect x="1127" y="489" width="5" height="25" fill="#bb0000" />
<rect x="1135" y="483" width="5" height="31" fill="#bb0000" />
<rect x="1144" y="505" width="5" height="9" fill="#bb0000" />
<rect x="1153" y="501" width="5" height="13" fill="#bb0000" />
<rect x="1162" y="489" width="5" height="25" fill="#bb0000" />
<rect x="1171" y="502" width="5" height="12" fill="#bb0000" />
<rect x="1179" y="505" width="5" height="9" fill="#bb0000" />
<rect x="1188" y="496" width="5" height="18" fill="#bb0000" />
<rect x="1197" y="489" width="5" height="25" fill="#bb0000" />
<rect x="1206" y="506" width="5" height="8" fill="#bb0000" />
<rect x="1214" y="504" width="5" height="10" fill="#bb0000" />
<rect x="1223" y="503" width="5" height="11" fill="#bb0000" />
<rect x="1232" y="503" width="5" height="11" fill="#bb0000" />
<rect x="1241" y="507" width="5" height="7" fill="#bb0000" />
<rect x="1250" y="498" width="5" height="16" fill="#bb0000" />
<rect x="1258" y="491" width="5" height="23" fill="#bb0000" />
<line x1="1244" y1="510.500" x2="1265.500" y2="480" stroke="#e02020" stroke-width="1" shape-rendering="auto"/>
<rect x="140.5" y="433.5" width="100" height="13" fill="#fff8c6" stroke="#3a6ac8"/><text x="145" y="443.5" font-size="9.200" textLength="92" lengthAdjust="spacing">Volume [3,939,118]</text>
<rect x="140.5" y="519.5" width="1155" height="82" fill="#fff" stroke="#3a6ac8"/>
<rect x="141" y="543" width="1154" height="1" fill="#d2d2d2" /><rect x="141" y="558" width="1154" height="1" fill="#d2d2d2" /><rect x="141" y="574" width="1154" height="1" fill="#d2d2d2" /><rect x="141" y="589" width="1154" height="1" fill="#d2d2d2" />
<rect x="198" y="520" width="1" height="81" fill="#d2d2d2" /><rect x="370" y="520" width="1" height="81" fill="#d2d2d2" /><rect x="558" y="520" width="1" height="81" fill="#d2d2d2" /><rect x="742" y="520" width="1" height="81" fill="#d2d2d2" /><rect x="927" y="520" width="1" height="81" fill="#d2d2d2" /><rect x="1102" y="520" width="1" height="81" fill="#d2d2d2" />
<rect x="1296" y="543" width="3" height="1" fill="#3a6ac8" /><rect x="1296" y="558" width="3" height="1" fill="#3a6ac8" /><rect x="1296" y="574" width="3" height="1" fill="#3a6ac8" /><rect x="1296" y="589" width="3" height="1" fill="#3a6ac8" />
<text x="1301" y="547" font-size="10.5" textLength="11.5" lengthAdjust="spacing">80</text>
<text x="1301" y="562" font-size="10.5" textLength="11.5" lengthAdjust="spacing">60</text>
<text x="1301" y="578" font-size="10.5" textLength="11.5" lengthAdjust="spacing">40</text>
<text x="1301" y="593" font-size="10.5" textLength="11.5" lengthAdjust="spacing">20</text>
<rect x="163" y="543" width="1098" height="1" fill="#000" />
<rect x="163" y="589" width="1098" height="1" fill="#000" />
<g shape-rendering="auto">
<polyline fill="none" stroke="#f0a000" stroke-width="1.2" stroke-linejoin="round" points="163,549 173.8,551.6 190.1,556.1 205.1,558.1 217.6,558.6 230.1,562.3 240.1,568.6 250.2,577.3 260.2,584.1 268.9,587.4 277.7,586.1 287.7,582.3 296.5,576.1 305.2,567.3 314,558.6 322.8,553.1 331.5,551.1 340.3,553.1 352.8,558.6 365.3,564.8 377.8,571.1 390.4,577.3 402.9,583.1 415.4,589.1 425.4,591.1 431.7,589.1 440.4,581.6 451.7,574.8 463,573.1 473,569.1 480,564.8 490,558.1 500,556.1 515.1,559.1 523.8,556.1 535.1,549.8 547.6,542.5 556.4,541.8 567.6,546.5 582.7,554.3 597.7,559.1 610.2,563.6 620.2,569.1 627.7,574.8 636.5,575.3 645.3,571.1 655.3,561.1 664,554.1 671.5,553.1 680.3,557.3 690.3,566.1 700.3,576.1 710.4,584.1 720.4,589.9 727.9,591.1 735.4,589.1 745.4,586.1 757.9,583.1 772.9,581.6 780,582.3 792.5,586.1 802.5,589.1 813.8,589.1 822.6,584.9 831.3,577.3 840.1,568.6 850.1,559.1 860.1,553.1 870.1,549 880.1,546.5 890.2,544 900.2,544.8 908.9,547.3 920.2,553.1 930.2,558.6 942.7,567.3 955.3,574.1 965.3,577.3 979,583.6 987.8,585.6 996.6,583.1 1005.3,574.8 1015.3,566.1 1025.4,559.1 1034,557.3 1049,557.3 1061.6,559.8 1074.1,564.1 1086.6,566.8 1104.1,567.3 1121.6,568.6 1130.4,564.8 1139.2,557.3 1147.9,550.6 1156.7,546.5 1164.2,545.5 1173,548.5 1181.7,556.1 1191.7,565.6 1200.5,571.6 1209.3,574.3 1218,574.1 1226.8,571.6 1235.6,568.1 1244.3,564.1 1253.1,561.1 1261.3,556.1"/>
<polyline fill="none" stroke="#0000cc" stroke-width="1.4" stroke-linejoin="round" points="164,553.1 173.8,554.3 191.3,563.1 198.8,561.8 205.6,560.6 216.4,559.3 225.1,565.3 233.9,569.8 241.4,578.6 250.2,588.6 256.4,593.6 262.7,598.1 267.7,596.6 277.2,587.4 287.7,574.8 296.5,563.6 305.2,553.6 314,545.5 322.8,541.8 326.5,543 330.3,546 340.3,553.6 349.1,562.3 357.8,569.8 366.6,574.8 375.3,578.6 384.1,581.6 392.9,588.1 401.6,591.1 410.4,596.6 419.2,599.1 426.7,595.6 431.7,587.4 435.4,578.6 444.2,566.6 454.2,563.6 463,572.3 473,563.6 480,556.1 489.5,545.5 497.5,552.3 506.3,559.8 515.6,564.8 523.8,554.8 532.6,544.8 542.6,534 550.1,536 558.9,543 567.6,552.3 576.4,559.8 585.2,565.6 597.7,566.6 610.2,571.1 620.2,578.6 629.2,586.1 639,576.1 647.8,558.6 655.8,543.5 664,541.8 667.8,545.5 672.8,553.6 681.6,568.6 690.3,579.8 699.1,592.4 707.8,597.4 717.9,601.1 726.6,597.4 735.4,588.6 744.2,583.6 752.9,580.6 770.4,580.6 780.5,584.1 788.8,588.1 797.5,593.6 805,596.1 813.8,589.1 822.6,576.1 831.3,562.3 840.1,552.3 848.9,547.3 857.6,543.5 867.6,543 876.4,540.3 885.2,542.3 893.9,541.5 900.2,547.3 908.9,552.3 917.7,561.1 926.5,565.6 936.5,574.8 945.2,579.8 955.3,584.9 964,584.1 972.8,588.6 981.5,593.1 987.8,589.9 995.3,582.3 1000.3,573.6 1006.6,558.6 1015.3,552.3 1024.9,546.5 1034,554.1 1042.8,556.6 1051.5,560.6 1060.3,563.1 1069.1,568.1 1077.8,571.1 1086.6,572.3 1095.4,569.3 1104.1,569.3 1112.9,571.1 1121.6,569.8 1130.4,559.8 1139.2,546 1147.9,537.3 1156.7,536 1164.2,542.3 1174.2,556.1 1183,572.3 1191.7,581.6 1200.5,586.1 1209.3,582.3 1218,574.8 1226.8,568.1 1235.6,563.6 1244.3,559.1 1253.1,555.6 1261.3,548.5"/>
</g>
<rect x="277" y="587" width="1" height="13" fill="#00c000" /><path d="M274 601L277.5 594L281 601z" fill="#00c000"/>
<rect x="435" y="578" width="1" height="22" fill="#00c000" /><path d="M432 601L435.5 594L439 601z" fill="#00c000"/>
<rect x="734" y="588" width="1" height="12" fill="#00c000" /><path d="M731 601L734.5 594L738 601z" fill="#00c000"/>
<rect x="813" y="590" width="1" height="10" fill="#00c000" /><path d="M810 601L813.5 594L817 601z" fill="#00c000"/>
<rect x="988" y="590" width="1" height="10" fill="#00c000" /><path d="M985 601L988.5 594L992 601z" fill="#00c000"/>
<rect x="330" y="534" width="1" height="12" fill="#ee0000" /><path d="M327 534L334 534L330.5 540.5z" fill="#ee0000"/>
<rect x="558" y="534" width="1" height="9" fill="#ee0000" /><path d="M555 534L562 534L558.5 540.5z" fill="#ee0000"/>
<rect x="672" y="534" width="1" height="19" fill="#ee0000" /><path d="M669 534L676 534L672.5 540.5z" fill="#ee0000"/>
<rect x="900" y="534" width="1" height="13" fill="#ee0000" /><path d="M897 534L904 534L900.5 540.5z" fill="#ee0000"/>
<rect x="1164" y="534" width="1" height="9" fill="#ee0000" /><path d="M1161 534L1168 534L1164.5 540.5z" fill="#ee0000"/>
<rect x="140.5" y="520.5" width="122" height="13" fill="#fff8c6" stroke="#3a6ac8"/><text x="145" y="530.5" font-size="9.200" textLength="114" lengthAdjust="spacing">STS - Stochastic [74.09]</text>
<rect x="140.5" y="606.5" width="1155" height="82" fill="#fff" stroke="#3a6ac8"/>
<rect x="141" y="620" width="1154" height="1" fill="#d2d2d2" /><rect x="141" y="636" width="1154" height="1" fill="#d2d2d2" /><rect x="141" y="652" width="1154" height="1" fill="#d2d2d2" /><rect x="141" y="667" width="1154" height="1" fill="#d2d2d2" /><rect x="141" y="683" width="1154" height="1" fill="#d2d2d2" />
<rect x="198" y="607" width="1" height="81" fill="#d2d2d2" /><rect x="370" y="607" width="1" height="81" fill="#d2d2d2" /><rect x="558" y="607" width="1" height="81" fill="#d2d2d2" /><rect x="742" y="607" width="1" height="81" fill="#d2d2d2" /><rect x="927" y="607" width="1" height="81" fill="#d2d2d2" /><rect x="1102" y="607" width="1" height="81" fill="#d2d2d2" />
<rect x="1296" y="620" width="3" height="1" fill="#3a6ac8" /><rect x="1296" y="636" width="3" height="1" fill="#3a6ac8" /><rect x="1296" y="652" width="3" height="1" fill="#3a6ac8" /><rect x="1296" y="667" width="3" height="1" fill="#3a6ac8" /><rect x="1296" y="683" width="3" height="1" fill="#3a6ac8" />
<text x="1301" y="624" font-size="10.5" textLength="11.5" lengthAdjust="spacing">70</text>
<text x="1301" y="640" font-size="10.5" textLength="11.5" lengthAdjust="spacing">60</text>
<text x="1301" y="656" font-size="10.5" textLength="11.5" lengthAdjust="spacing">50</text>
<text x="1301" y="671" font-size="10.5" textLength="11.5" lengthAdjust="spacing">40</text>
<text x="1301" y="687" font-size="10.5" textLength="11.5" lengthAdjust="spacing">30</text>
<rect x="163" y="620" width="1098" height="1" fill="#000" />
<rect x="163" y="683" width="1098" height="1" fill="#000" />
<g shape-rendering="auto">
<polyline fill="none" stroke="#0000cc" stroke-width="1.3" stroke-linejoin="round" points="164,646.8 172.5,652.6 181.3,657.6 190.1,662.1 198.8,646.3 207.6,655.1 216.4,657.6 225.1,660.1 233.9,662.6 242.7,660.1 252.7,663.3 261.4,659.3 270.2,659.3 279,651.3 287.7,650.1 296.5,649.1 304,639.6 314,636.3 322.8,636.3 331.5,642.6 340.3,648.8 349.1,650.6 357.8,656.3 366.6,657.6 377.8,657.6 384.1,659.3 392.9,662.6 401.6,656.3 410.4,663.1 419.2,670.9 427.9,652.6 436.7,642.1 445.4,648.8 454.2,653.1 463,662.1 471.7,647.1 481.3,647.1 490,649.6 498.8,657.1 507.6,657.1 515.1,655.1 523.8,643.8 532.6,638.1 542.6,634.3 550.1,636.3 558.9,645.1 567.6,647.1 577.7,647.1 586.4,652.1 595.2,648.1 602.7,650.1 611.5,659.3 621.5,659.3 629.2,662.1 637.7,645.6 646.5,635.1 656.5,627.5 665.3,640.1 674,651.3 681.6,660.1 690.3,661.3 699.1,665.1 707.8,670.1 717.4,678.1 725.4,668.1 735.4,663.3 744.2,664.6 752.9,657.6 761.7,662.1 770.4,662.1 779.2,665.1 787,669.6 792.5,681.4 796.3,688.1 800,687.6 805,682.1 813.8,670.6 820.1,665.6 831.3,653.1 840.1,651.3 849.6,655.1 858.9,650.6 867.6,651.3 876.4,650.6 885.2,653.3 893.9,650.6 900.9,660.8 910.2,662.6 920.2,668.1 929,664.3 936.5,666.8 945.2,671.4 964,671.4 972.8,678.9 979.8,687.1 984,680.1 989.1,668.9 997.8,665.6 1007.3,641.3 1015.3,652.1 1024.1,653.1 1034,658.3 1042.8,656.3 1051.5,660.1 1060.3,663.8 1069.1,668.1 1077.8,665.6 1086.6,662.6 1095.4,660.1 1104.1,666.3 1112.1,666.3 1120.4,647.6 1130.4,638.8 1139.2,634.6 1147.9,633.3 1155.4,637.1 1164.2,646.3 1173.7,653.1 1182.2,665.1 1191.7,668.1 1200.5,660.1 1209.3,657.6 1218,655.6 1226.8,647.1 1235.6,649.3 1244.3,646.3 1253.1,641.8 1261.3,637.6"/>
</g>
<rect x="804" y="680" width="1" height="7" fill="#00c000" /><path d="M801 688L804.5 681L808 688z" fill="#00c000"/>
<rect x="988" y="668" width="1" height="19" fill="#00c000" /><path d="M985 688L988.5 681L992 688z" fill="#00c000"/>
<rect x="140.5" y="607.5" width="179" height="12" fill="#fff8c6" stroke="#3a6ac8"/><text x="145" y="616.5" font-size="9.200" textLength="171" lengthAdjust="spacing">RSI - Relative Strength Index [59.79]</text>
</svg>
<div class="tb" style="left:8px;top:699px;width:18px;height:18px;border-radius:2px"><svg style="left:-1px;top:-1px" width="18" height="18" viewBox="0 0 18 18"><path d="M3 3L7 3L7 4.5L4.5 7L3 7zM3 15L7 15L7 13.5L4.5 11L3 11zM15 3L11 3L11 4.5L13.5 7L15 7zM15 15L11 15L11 13.5L13.5 11L15 11z" fill="#000"/><rect x="6.500" y="6.500" width="5" height="5" fill="#fff" stroke="#a00000" shape-rendering="crispEdges"/></svg></div>
<div class="a" style="left:0px;top:724px;width:1366px;height:44px;background:#d4d0c8;"></div>
<div class="a" style="left:0px;top:724px;width:1366px;height:1px;background:#fff;"></div>
<div class="a" style="left:2px;top:728px;width:54px;height:38px;background:#d4d0c8;border:1px solid;border-color:#fff #404040 #404040 #fff;box-shadow:inset -1px -1px 0 #808080"></div>
<svg class="a" style="left:4px;top:738px" width="16" height="16" viewBox="0 0 16 16"><path d="M2.500 2.500c2-1.200 3.500-1 5.300 0l-1.300 5c-1.800-1-3.300-1.200-5.300 0z" fill="#e8541c"/><path d="M8.800 2.800c2 1 3.500 1 5.500-.300l-1.300 5c-2 1.300-3.500 1.300-5.500.300z" fill="#6bb52a"/><path d="M1 8.500c2-1.200 3.500-1 5.300 0l-1.300 5c-1.800-1-3.300-1.200-5.300 0z" fill="#2a6fd4"/><path d="M7.300 8.800c2 1 3.500 1 5.500-.300l-1.300 5c-2 1.300-3.500 1.300-5.500.300z" fill="#f2b816"/></svg>
<div class="a" style="left:21px;top:739px;font-weight:bold;font-size:11.500px;line-height:15px;letter-spacing:0.100px">Inicio</div>
<div class="a" style="left:65px;top:728px;width:44px;height:38px;background:#d4d0c8;border:1px solid;border-color:#fff #404040 #404040 #fff;box-shadow:inset -1px -1px 0 #808080"></div>
<div class="a" style="left:110px;top:728px;width:1px;height:38px;background:#808080;"></div>
<div class="a" style="left:111px;top:728px;width:1px;height:38px;background:#fff;"></div>
<div class="a" style="left:112px;top:728px;width:1px;height:38px;background:#404040;"></div>
<svg class="a" style="left:69px;top:730px" width="36" height="34" viewBox="0 0 36 34"><defs><linearGradient id="ieg" x1="0" y1="0" x2="0" y2="1"><stop offset="0" stop-color="#58b8f0"/><stop offset="1" stop-color="#1c84dc"/></linearGradient></defs><circle cx="17.500" cy="17" r="10.200" fill="none" stroke="url(#ieg)" stroke-width="6.500"/><rect x="8" y="14.500" width="23" height="5" fill="url(#ieg)"/><path d="M17.500 17.300L33 19.800L31 25z" fill="#d4d0c8"/><path d="M31.500 7.500c-1-6-12-4-21 5c-6 6-9 13-5.500 17" fill="none" stroke="#f4b81c" stroke-width="2.600"/></svg>
<svg class="a" style="left:122px;top:733px" width="34" height="31" viewBox="0 0 34 31"><path d="M2 3h11l2 3h16v22h-29z" fill="#f3dc8c" stroke="#c9a646"/><rect x="3" y="8" width="27" height="5" fill="#fff6cc"/><rect x="5" y="2" width="3" height="2" fill="#30b040"/><rect x="14" y="4" width="3" height="2" fill="#e03020"/><rect x="22" y="6" width="3" height="2" fill="#3090e0"/><path d="M6 17h22v13h-5v-6h-12v6h-5z" fill="#9fd0f4" stroke="#5aa0d8"/><rect x="7" y="18" width="20" height="3" fill="#d8eefc"/></svg>
<svg class="a" style="left:174px;top:735px" width="28" height="27" viewBox="0 0 28 27"><rect x="6" y="1" width="20" height="22" fill="#cfe4f4" stroke="#9cc4e0"/><rect x="4" y="1.500" width="20" height="23" fill="#a8d0ec" stroke="#84b8dc"/><rect x="1" y="1" width="20" height="24" fill="#6cb4e4" stroke="#4c98d0"/><circle cx="11.500" cy="12.500" r="8.500" fill="#f07c14" stroke="#fbd0a0" stroke-width="1.200"/><path d="M8.500 7.500l8 5l-8 5z" fill="#fff"/></svg>
<svg class="a" style="left:224px;top:731px" width="31" height="31" viewBox="0 0 31 31"><defs><linearGradient id="cg" x1="0" y1="0" x2="0" y2="1"><stop offset="0" stop-color="#ffffff"/><stop offset="1" stop-color="#b0b0b8"/></linearGradient></defs><circle cx="15.500" cy="15.500" r="13" fill="url(#cg)" stroke="#101010" stroke-width="3"/><path d="M15.500 6v10l-6.500 4" stroke="#101010" stroke-width="1.600" fill="none"/><path d="M15.500 16l9 1.500" stroke="#d04040" stroke-width="0.800"/></svg>
<svg class="a" style="left:277px;top:730px" width="30" height="34" viewBox="0 0 30 34"><path d="M9.500 24l-6 8" stroke="#909090" stroke-width="1.800"/><ellipse cx="11.500" cy="19.500" rx="8" ry="4.500" transform="rotate(30 11.500 19.500)" fill="#c81414"/><path d="M9 13l8 9l5-6l-6-8z" fill="#e01c1c"/><ellipse cx="19.500" cy="8" rx="8.500" ry="6" transform="rotate(30 19.500 8)" fill="#e82424"/><ellipse cx="18" cy="5.500" rx="4" ry="2" transform="rotate(30 18 5.500)" fill="#ff8c8c"/></svg>
<div class="a" style="left:315px;top:728px;width:48px;height:38px;background:#d4d0c8;border:1px solid;border-color:#fff #404040 #404040 #fff;box-shadow:inset -1px -1px 0 #808080"></div>
<svg class="a" style="left:321px;top:731px" width="36" height="34" viewBox="0 0 36 34"><path d="M3 22c-1-8 8-14 17-12c7 2 8 9 4 14c-3 3.500-2 6-6 7c-7 1.500-14-2-15-9z" fill="#b8dcf4" stroke="#6c9ccc"/><circle cx="8.500" cy="17.500" r="2.300" fill="#e04038"/><circle cx="14" cy="12.500" r="2.300" fill="#50b838"/><circle cx="20.500" cy="10.500" r="2.300" fill="#f0b020"/><circle cx="17" cy="19.500" r="2" fill="#fff" stroke="#6c9ccc"/><path d="M30.500 5l-11 24" stroke="#e8902c" stroke-width="2.600"/><path d="M28 2l5 2l-1.500 5l-4-1.500z" fill="#d8b88c"/></svg>
<div class="a" style="left:365px;top:728px;width:48px;height:38px;background:#fff;border:1px solid;border-color:#404040 #fff #fff #404040;box-shadow:inset 1px 1px 0 #808080"></div>
<svg class="a" style="left:373px;top:731px" width="33" height="32" viewBox="0 0 33 32"><rect x="0.700" y="0.700" width="31.600" height="30.600" rx="5" fill="#fbfbfd" stroke="#7c98bc" stroke-width="1.400"/><path d="M19 4c-5 3.500-5 5.500-3 9.500" stroke="#e8761a" stroke-width="1.800" fill="none"/><path d="M15 8c-1.500 2-1 3.500 0 5.500" stroke="#e8761a" stroke-width="1.300" fill="none"/><path d="M9 17h13M10 20.500h11M8 25h15M10 27.500h11" stroke="#5a82ac" stroke-width="1.700"/><path d="M22 17c4-.500 4 4-.500 5" stroke="#5a82ac" stroke-width="1.500" fill="none"/></svg>
<div class="a" style="left:1183px;top:738px;font-size:11px;line-height:14px;letter-spacing:0.500px">ES</div>
<div class="a" style="left:1202px;top:734px;width:1px;height:22px;background:#808080;"></div>
<div class="a" style="left:1203px;top:734px;width:1px;height:22px;background:#fff;"></div>
<div class="a" style="left:1206px;top:728px;width:158px;height:38px;border:1px solid;border-color:#808080 #fff #fff #808080"></div>
<svg class="a" style="left:1212px;top:741px" width="7" height="9" viewBox="0 0 7 9"><path d="M0.700 3.800l2.800-2.600l2.800 2.600M0.700 7.800l2.800-2.600l2.800 2.600" stroke="#000" stroke-width="1.500" fill="none"/></svg>
<svg class="a" style="left:1231px;top:738px" width="12" height="18" viewBox="0 0 12 18"><rect x="3.500" y="0.500" width="5" height="2" fill="#fff" stroke="#909090"/><rect x="1" y="2" width="10" height="15" rx="2" fill="#fff" stroke="#909090" stroke-width="1.200"/><rect x="3" y="4" width="6" height="7" fill="#909090"/><rect x="3" y="11" width="6" height="4" fill="#fff"/></svg>
<svg class="a" style="left:1252px;top:740px" width="18" height="14" viewBox="0 0 18 14"><g fill="#e8e8e8" stroke="#909090" stroke-width="0.800"><rect x="0.500" y="10.500" width="3" height="3"/><rect x="4" y="8" width="3" height="5.500"/><rect x="7.500" y="5.500" width="3" height="8" fill="#a8a8a8"/><rect x="11" y="3" width="3" height="10.500" fill="#a8a8a8"/><rect x="14.500" y="0.500" width="3" height="13" fill="#a8a8a8"/></g></svg>
<div class="a" style="left:1277px;top:731px;width:66px;text-align:center;font-size:11.500px;line-height:16px;white-space:nowrap">09:12 p.m.<br>26/03/2011</div>
<svg class="a" style="left:1346px;top:741px" width="16" height="13" viewBox="0 0 16 13"><rect width="16" height="13" fill="#7aa8e0"/><rect x="1" y="1" width="14" height="8" fill="#2c62c0"/><rect x="0" y="10" width="16" height="3" fill="#202830"/><rect x="1" y="9" width="3" height="3" fill="#e8c020"/></svg>
</div></body></html>
